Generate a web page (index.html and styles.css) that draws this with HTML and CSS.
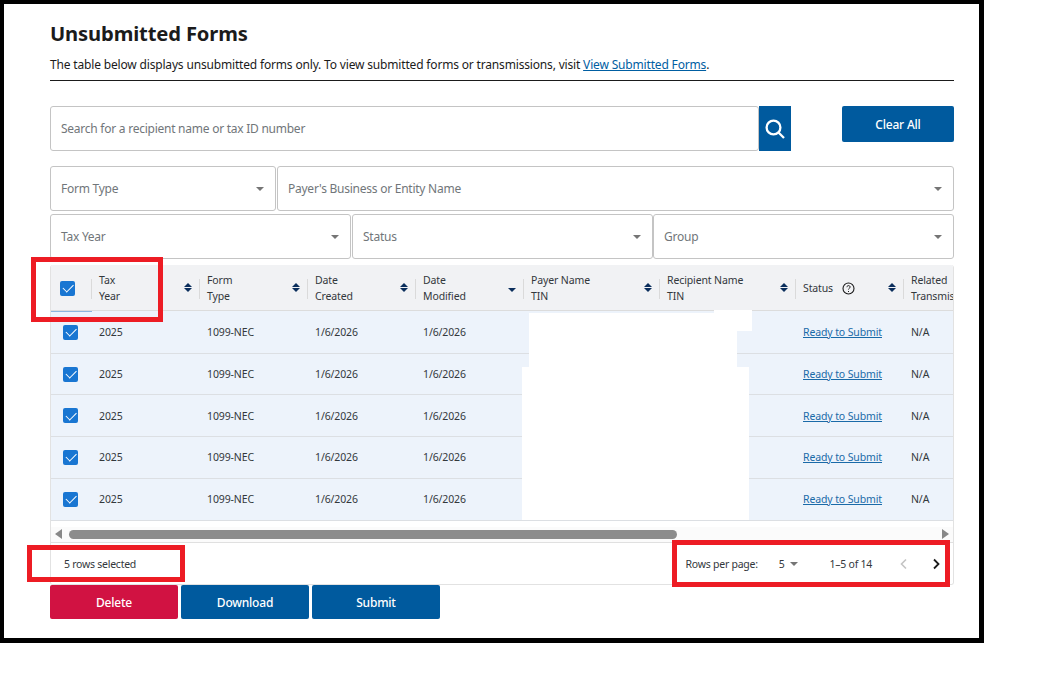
FILE: index.html
```html
<!DOCTYPE html>
<html lang="en">
<head>
<meta charset="utf-8">
<title>Unsubmitted Forms</title>
<link rel="stylesheet" href="styles.css">
</head>
<body>
<main class="frame">
  <h1 class="title">Unsubmitted Forms</h1>
  <p class="intro">The table below displays unsubmitted forms only. To view submitted forms or transmissions, visit <a href="#">View Submitted Forms</a>.</p>
  <hr class="rule">

  <div class="search-row">
    <div class="search">
      <div class="field search-input">Search for a recipient name or tax ID number</div>
      <button class="search-btn" aria-label="Search">
        <svg width="24" height="24" viewBox="0 0 24 24" fill="none" stroke="#fff" stroke-width="2.3"><circle cx="10.5" cy="10.5" r="6.9"/><path d="M15.5 15.5 21 21"/></svg>
      </button>
    </div>
    <button class="btn btn-clear">Clear All</button>
  </div>

  <div class="filters filters-a">
    <div class="field select">Form Type<i class="caret"></i></div>
    <div class="field select">Payer's Business or Entity Name<i class="caret"></i></div>
  </div>
  <div class="filters filters-b">
    <div class="field select">Tax Year<i class="caret"></i></div>
    <div class="field select">Status<i class="caret"></i></div>
    <div class="field select">Group<i class="caret"></i></div>
  </div>

  <section class="table">
    <div class="thead grid">
      <div class="cell check-cell"><span class="check"></span></div>
      <div class="cell th"><span>Tax<br>Year</span><i class="sort"></i></div>
      <div class="cell th"><span>Form<br>Type</span><i class="sort"></i></div>
      <div class="cell th"><span>Date<br>Created</span><i class="sort"></i></div>
      <div class="cell th"><span>Date<br>Modified</span><i class="sort down"></i></div>
      <div class="cell th"><span>Payer Name<br>TIN</span><i class="sort"></i></div>
      <div class="cell th"><span>Recipient Name<br>TIN</span><i class="sort"></i></div>
      <div class="cell th"><span class="status-head">Status
        <svg width="13" height="13" viewBox="0 0 13 13" fill="none" stroke="#1b1b1b"><circle cx="6.5" cy="6.5" r="5.5" stroke-width="1.1"/><path d="M4.9 5.2c0-2.1 3.2-2.1 3.2-.1 0 1.200-1.600 1.200-1.600 2.400" stroke-width="1"/><path d="M6.500 9v1" stroke-width="1"/></svg></span><i class="sort"></i></div>
      <div class="cell th last"><span>Related<br>Transmission</span></div>
    </div>
    <div class="row r1 grid"><div class="cell check-cell"><span class="check"></span></div><div class="cell">2025</div><div class="cell">1099-NEC</div><div class="cell">1/6/2026</div><div class="cell">1/6/2026</div><div class="cell"></div><div class="cell"></div><div class="cell"><a href="#">Ready to Submit</a></div><div class="cell">N/A</div></div>
    <div class="row r2 grid"><div class="cell check-cell"><span class="check"></span></div><div class="cell">2025</div><div class="cell">1099-NEC</div><div class="cell">1/6/2026</div><div class="cell">1/6/2026</div><div class="cell"></div><div class="cell"></div><div class="cell"><a href="#">Ready to Submit</a></div><div class="cell">N/A</div></div>
    <div class="row r3 grid"><div class="cell check-cell"><span class="check"></span></div><div class="cell">2025</div><div class="cell">1099-NEC</div><div class="cell">1/6/2026</div><div class="cell">1/6/2026</div><div class="cell"></div><div class="cell"></div><div class="cell"><a href="#">Ready to Submit</a></div><div class="cell">N/A</div></div>
    <div class="row r4 grid"><div class="cell check-cell"><span class="check"></span></div><div class="cell">2025</div><div class="cell">1099-NEC</div><div class="cell">1/6/2026</div><div class="cell">1/6/2026</div><div class="cell"></div><div class="cell"></div><div class="cell"><a href="#">Ready to Submit</a></div><div class="cell">N/A</div></div>
    <div class="row r5 grid"><div class="cell check-cell"><span class="check"></span></div><div class="cell">2025</div><div class="cell">1099-NEC</div><div class="cell">1/6/2026</div><div class="cell">1/6/2026</div><div class="cell"></div><div class="cell"></div><div class="cell"><a href="#">Ready to Submit</a></div><div class="cell">N/A</div></div>

    <div class="scrollbar">
      <i class="arrow left"></i>
      <div class="track"><div class="thumb"></div></div>
      <i class="arrow right"></i>
    </div>

    <footer class="tfoot">
      <span>5 rows selected</span>
      <div class="pager">
        <span class="rpp">Rows per page:</span>
        <span class="rpp-val">5<i class="caret"></i></span>
        <span class="range">1–5 of 14</span>
        <svg class="chev" width="10" height="12" viewBox="0 0 10 12" fill="none" stroke="#c4c4c4" stroke-width="1.600"><path d="M7 1.500 2.500 6 7 10.500"/></svg>
        <svg class="chev next" width="10" height="12" viewBox="0 0 10 12" fill="none" stroke="#1b1b1b" stroke-width="1.800"><path d="M3 1.500 7.500 6 3 10.500"/></svg>
      </div>
    </footer>
  </section>

  <div class="actions">
    <button class="btn btn-danger">Delete</button>
    <button class="btn">Download</button>
    <button class="btn">Submit</button>
  </div>

  <!-- redactions and callouts laid over the screenshot -->
  <div class="redact rd1"></div>
  <div class="redact rd2"></div>
  <div class="redact rd3"></div>
  <div class="callout c1"></div>
  <div class="callout c2"></div>
  <div class="callout c3"></div>
</main>
</body>
</html>
```
FILE: styles.css
```css
* { box-sizing: border-box; }
html, body { margin: 0; padding: 0; background: #fff; }
body { font-family: "Noto Sans", "Liberation Sans", sans-serif; color: #1b1b1b; }

.frame {
  position: relative;
  width: 984px;
  height: 643px;
  border: solid #000;
  border-width: 4px 5px 5px 4px;
  padding: 16px 25px 0 46px;
  background: #fff;
}

.title { margin: 0; font-size: 20.2px; line-height: 26px; font-weight: 700; letter-spacing: -.15px; }
.intro { margin: 10px 0 0; font-size: 12px; line-height: 18px; letter-spacing: -.17px; }
.intro a { color: #005ea2; }
.rule { margin: 6px 0 0; border: 0; border-top: 1px solid #1b1b1b; height: 1px; }

.search-row { display: flex; justify-content: space-between; align-items: flex-start; margin-top: 25px; }
.search { display: flex; }
.field {
  display: flex; align-items: center; position: relative;
  height: 45px; padding: 0 10px;
  background: #fff; border: 1px solid #c4c4c4; border-radius: 3px;
  font-size: 12px; color: #71767a; letter-spacing: -.25px;
}
.search-input { width: 709px; }
.search-btn { width: 32px; height: 45px; padding: 0; border: 0; background: #005a9e; display: flex; align-items: center; justify-content: center; }

.btn {
  height: 34px; padding: 0; border: 0; border-radius: 2px;
  background: #005a9e; color: #fff;
  font: 500 12px "Noto Sans", sans-serif; letter-spacing: -.2px;
}
.btn-clear { width: 112px; height: 36px; }
.btn-danger { background: #d11242; }

.filters { display: grid; }
.filters-a { grid-template-columns: 226px 1fr; column-gap: 1px; margin-top: 15px; }
.filters-b { grid-template-columns: 301px 302px 1fr; column-gap: 0; margin-top: 3px; }
.filters-b .field:nth-child(2) { margin-left: 1px; }
.select .caret { position: absolute; right: 11px; top: 20px; }
.caret { display: inline-block; width: 0; height: 0; border: 4.300px solid transparent; border-top: 4px solid #757575; border-bottom: 0; }

.table {
  margin-top: 6px; width: 904px; overflow: hidden;
  border: 1px solid #e2e2e2; border-width: 0 1px 1px 1px; border-radius: 3px;
}
.grid { display: grid; grid-template-columns: 40px 108px 108px 108px 108px 136px 136px 108px 50px; }
.thead { height: 46px; background: #f1f2f4; border-bottom: 1px solid #dcdcdc; }
.row { background: #edf3fb; border-bottom: 1px solid #dcdfe3; }
.r1 { height: 43px; } .r2 { height: 41px; } .r3 { height: 42px; } .r4 { height: 42px; } .r5 { height: 42px; }
.cell { display: flex; align-items: center; padding-left: 8px; font-size: 10.500px; letter-spacing: -.12px; white-space: nowrap; color: #33383c; overflow: hidden; min-width: 0; }
.r4 .cell, .r5 .cell { padding-bottom: 1px; }
.check-cell { padding-left: 12px; position: relative; }
.thead .check-cell { padding-left: 9px; padding-top: 1px; overflow: visible; }
.thead .check-cell::after { content: ""; position: absolute; left: 0; right: -1px; bottom: -2px; height: 1px; background: #8db6df; }
.th { position: relative; line-height: 16px; color: #33383c; overflow: hidden; padding-top: 1px; }
.th::before { content: ""; position: absolute; left: 0; top: 14px; height: 20px; width: 1px; background: #dadada; }
.th .sort { position: absolute; right: 7px; top: 18px; }
.th.last { overflow: hidden; }
.status-head { display: flex; align-items: center; gap: 9px; }
.sort { display: block; width: 8px; height: 10px; }
.sort::before, .sort::after { content: ""; display: block; width: 0; border: 4px solid transparent; }
.sort::before { border-bottom: 4.500px solid #0b2e5c; border-top: 0; margin-bottom: 1px; }
.sort::after { border-top: 4.500px solid #0b2e5c; border-bottom: 0; }
.sort.down::before { visibility: hidden; }

.check {
  display: flex; align-items: center; justify-content: center;
  width: 15px; height: 15px; border-radius: 2px; background: #1976d2;
}
.check::after {
  content: ""; width: 9px; height: 4.500px; margin-top: -2px;
  border: solid #fff; border-width: 0 0 1.800px 1.800px; transform: rotate(-45deg);
}
.cell a, .intro a { text-decoration: underline; }
.cell a { color: #1a6aa8; }

.scrollbar { display: flex; align-items: center; height: 16px; margin-top: 6px; padding: 0 4px 1px; background: #fbfbfb; border-bottom: 1px solid #e0e0e0; }
.track { flex: 1; height: 9px; padding-left: 7px; }
.thumb { width: 608px; height: 9px; border-radius: 5px; background: #8c8c8c; }
.arrow { width: 0; height: 0; border: 5px solid transparent; }
.arrow.left { border-right: 7px solid #888; border-left: 0; }
.arrow.right { border-left: 7px solid #888; border-right: 0; }

.tfoot { display: flex; align-items: center; justify-content: space-between; height: 41px; padding: 0 12px 0 13px; font-size: 10.500px; letter-spacing: -.25px; color: #33383c; background: #fff; }
.pager { display: flex; align-items: center; }
.rpp-val { display: inline-flex; align-items: center; gap: 5px; margin-left: 21px; }
.range { margin-left: 32px; margin-right: 27px; }
.chev.next { margin-left: 22px; }

.actions { display: flex; gap: 3px; }
.actions .btn { width: 128px; }

.redact { position: absolute; background: #fff; }
.rd1 { left: 525px; top: 309px; width: 208px; height: 54px; }
.rd2 { left: 710px; top: 306px; width: 38px; height: 21px; }
.rd3 { left: 518px; top: 363px; width: 227px; height: 153px; }

.callout { position: absolute; border: 5px solid #ed1c24; }
.c1 { left: 27px; top: 253px; width: 132px; height: 65px; }
.c2 { left: 23px; top: 541px; width: 158px; height: 37px; }
.c3 { left: 668px; top: 536px; width: 278px; height: 47px; }
```
